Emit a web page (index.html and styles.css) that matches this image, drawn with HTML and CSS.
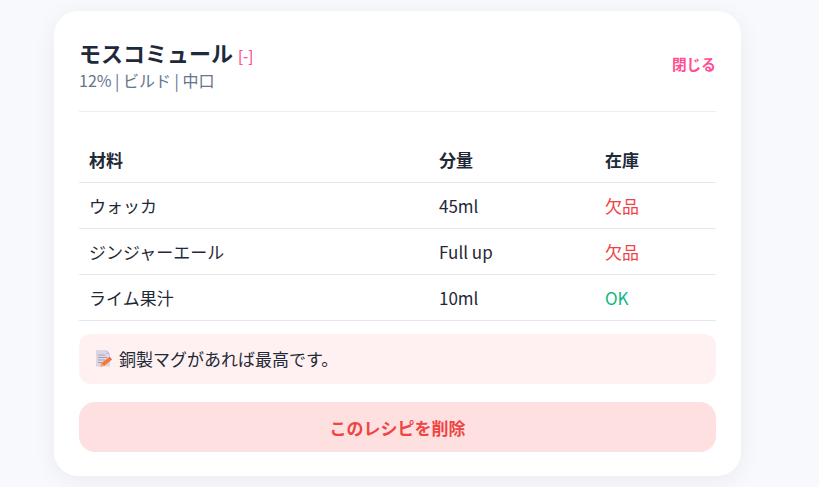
FILE: index.html
```html
<!DOCTYPE html>
<html lang="ja">
<head>
    <meta charset="UTF-8">
    <title>モスコミュール</title>
    <link rel="stylesheet" href="styles.css">
</head>
<body>
    <div class="card">
        <div class="card-header">
            <div>
                <h2 class="title">モスコミュール <span class="toggle">[-]</span></h2>
                <p class="meta">12% | ビルド | 中口</p>
            </div>
            <span class="close">閉じる</span>
        </div>

        <table class="recipe">
            <thead>
                <tr>
                    <th class="col-name">材料</th>
                    <th class="col-amount">分量</th>
                    <th>在庫</th>
                </tr>
            </thead>
            <tbody>
                <tr>
                    <td>ウォッカ</td>
                    <td>45ml</td>
                    <td class="out">欠品</td>
                </tr>
                <tr>
                    <td>ジンジャーエール</td>
                    <td>Full up</td>
                    <td class="out">欠品</td>
                </tr>
                <tr>
                    <td>ライム果汁</td>
                    <td>10ml</td>
                    <td class="ok">OK</td>
                </tr>
            </tbody>
        </table>

        <div class="note">
            <svg class="note-icon" width="16" height="17" viewBox="0 0 16 17">
                <path d="M0 0h10.500l3.500 4v12.500H0z" fill="#dcd6e4"/>
                <path d="M10.500 0l3.500 4h-3.500z" fill="#c4bcd0"/>
                <path d="M2 5h7M2 7.500h9M2 10h7M2 12.500h4" stroke="#a9a2b6" stroke-width="1"/>
                <path d="M5 13.500l7-5.500 3 2.500-7 5.500z" fill="#f4792b"/>
                <path d="M5 13.500l3 2.500-4 1z" fill="#f2a673"/>
                <path d="M12 8l1.500-1.200 2.500 2.500-1 1.200z" fill="#ef5a4c"/>
            </svg>
            <span class="note-text">銅製マグがあれば最高です。</span>
        </div>

        <button class="delete-btn">このレシピを削除</button>
    </div>
</body>
</html>
```

FILE: styles.css
```css
body {
    margin: 0;
    height: 487px;
    overflow: hidden;
    background-color: #f8f9fc;
    font-family: "Noto Sans CJK JP", "Noto Sans", sans-serif;
    color: #1f2937;
}
.card {
    box-sizing: border-box;
    width: 687px;
    height: 465px;
    margin: 11px 0 0 54px;
    padding: 25px;
    background: white;
    border-radius: 24px;
    box-shadow: 0 4px 24px rgba(0, 0, 0, 0.06);
}
.card-header {
    display: flex;
    justify-content: space-between;
    align-items: center;
    height: 76px;
    box-sizing: border-box;
    padding-bottom: 22px;
    border-bottom: 1px solid #eeeeee;
}
.title {
    margin: 0;
    font-size: 22px;
    line-height: 32px;
    font-weight: 700;
    color: #1e293b;
}
.toggle {
    font-size: 14.400px;
    font-weight: 500;
    color: #ff4f93;
}
.meta {
    margin: 0;
    font-size: 16px;
    line-height: 17px;
    color: #64748b;
}
.close {
    padding-top: 2px;
    font-size: 14.700px;
    font-weight: 700;
    color: #ff4f93;
}
.recipe {
    width: 100%;
    margin-top: 24px;
    border-collapse: collapse;
    table-layout: fixed;
    font-size: 17px;
}
.recipe th,
.recipe td {
    height: 46px;
    padding: 1px 10px 0;
    box-sizing: border-box;
    text-align: left;
    border-bottom: 1px solid #e2e8f0;
}
.recipe th {
    padding-top: 2px;
    font-weight: 700;
}
.col-name {
    width: 350px;
}
.col-amount {
    width: 166px;
}
.out {
    color: #ef4444;
}
.ok {
    color: #10b981;
}
.note {
    display: flex;
    align-items: center;
    gap: 7px;
    height: 50px;
    margin-top: 13px;
    padding: 0 16px 0 17px;
    box-sizing: border-box;
    background: #fff1f1;
    border-radius: 12px;
    font-size: 17px;
}
.delete-btn {
    display: block;
    width: 100%;
    height: 50px;
    margin-top: 18px;
    padding: 1px 0 0;
    background: #fee0e0;
    color: #ef4444;
    border: none;
    border-radius: 16px;
    font-family: inherit;
    font-size: 17px;
    font-weight: 700;
}
```
